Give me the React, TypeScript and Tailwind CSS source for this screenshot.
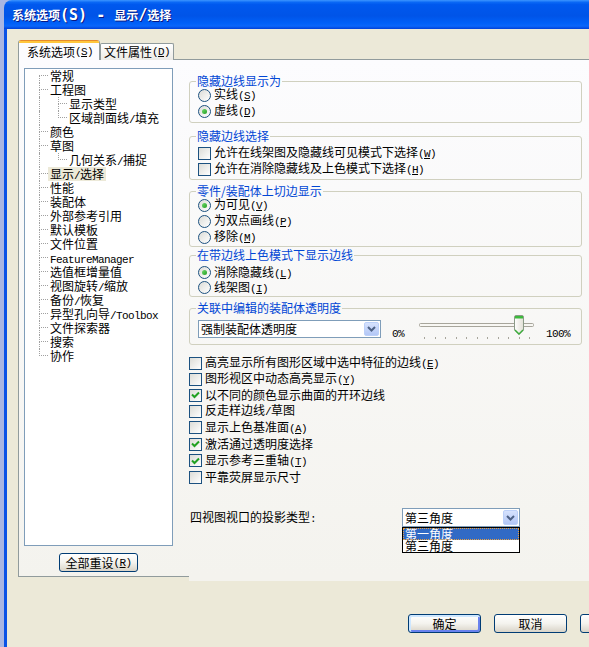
import React from "react";

// Latin runs are set in a narrow monospace face so they sit half-width beside the CJK glyphs
function Txt({ s }: { s: string }) {
  const parts = s.split(/([\x20-\x7e]+)/).filter((p) => p.length > 0);
  return (
    <>
      {parts.map((p, i) =>
        /^[\x20-\x7e]+$/.test(p) ? (
          <span key={i} className="font-['Liberation_Mono',monospace] text-[11px] tracking-[-0.6px]">
            {p}
          </span>
        ) : (
          <span key={i}>{p}</span>
        )
      )}
    </>
  );
}

// Access-key hint such as (S) with the letter underlined
function Mn({ k }: { k: string }) {
  return (
    <span className="font-['Liberation_Mono',monospace] text-[11px] tracking-[-0.6px]">
      (<span className="underline underline-offset-1">{k}</span>)
    </span>
  );
}

function Radio({ on }: { on?: boolean }) {
  return (
    <span className="flex h-[13px] w-[13px] shrink-0 items-center justify-center rounded-full border border-[#1C5180] bg-linear-to-br from-[#DCDCD7] to-white">
      {on && <span className="h-[5px] w-[5px] rounded-full bg-linear-to-br from-[#6EDB6A] to-[#1E9E1E]" />}
    </span>
  );
}

function Check({ on }: { on?: boolean }) {
  return (
    <span className="flex h-[13px] w-[13px] shrink-0 items-center justify-center border border-[#1C5180] bg-linear-to-br from-[#DCDCD7] to-white">
      {on && (
        <svg width="9" height="8" viewBox="0 0 9 8">
          <polyline points="1,3.5 3.5,6 8,1.5" fill="none" stroke="#21A121" strokeWidth="2" />
        </svg>
      )}
    </span>
  );
}

function Legend({ children }: { children: React.ReactNode }) {
  return <legend className="-ml-[2px] px-[1px] leading-[12px] text-[#0046D5]">{children}</legend>;
}

function RadioRow({ label, k, on, h15 }: { label: string; k?: string; on?: boolean; h15?: boolean }) {
  return (
    <div className={`flex items-center gap-[3px] leading-[14px] ${h15 ? "h-[15px]" : "h-[16px]"}`}>
      <Radio on={on} />
      <span>
        <Txt s={label} />
        {k && <Mn k={k} />}
      </span>
    </div>
  );
}

function CheckRow({ label, k, on, tall }: { label: string; k?: string; on?: boolean; tall?: boolean }) {
  return (
    <div className={`flex items-center gap-[3px] leading-[14px] ${tall ? "h-[17px]" : "h-[16px]"}`}>
      <Check on={on} />
      <span>
        <Txt s={label} />
        {k && <Mn k={k} />}
      </span>
    </div>
  );
}

function Combo({ text, className }: { text: string; className: string }) {
  return (
    <div className={`flex items-stretch border border-[#7F9DB9] bg-white ${className}`}>
      <span className="flex flex-1 items-center pl-[2px] leading-[14px]">{text}</span>
      <span className="m-[1px] flex w-[15px] items-center justify-center rounded-[2px] border border-[#BCD0F9] bg-linear-to-b from-[#D6E2FD] to-[#B3C7F6]">
        <svg width="9" height="6" viewBox="0 0 9 6">
          <polyline points="1,1 4.5,4.5 8,1" fill="none" stroke="#4D6185" strokeWidth="2" />
        </svg>
      </span>
    </div>
  );
}

function XpButton({ children, className, def }: { children?: React.ReactNode; className: string; def?: boolean }) {
  return (
    <div
      className={`flex h-[19px] items-center justify-center rounded-[3px] border border-[#003C74] bg-linear-to-b from-white via-[#F4F3EE] to-[#D9D4C8] leading-[14px] ${
        def ? "shadow-[inset_1px_1px_0_1px_#CEE7FF,inset_-1px_-1px_0_1px_#6982EE]" : ""
      } ${className}`}
    >
      {children}
    </div>
  );
}

type TreeItem = { t: string; lvl: 0 | 1; first?: boolean; last?: boolean; sel?: boolean };

const tree: TreeItem[] = [
  { t: "常规", lvl: 0, first: true },
  { t: "工程图", lvl: 0 },
  { t: "显示类型", lvl: 1 },
  { t: "区域剖面线/填充", lvl: 1, last: true },
  { t: "颜色", lvl: 0 },
  { t: "草图", lvl: 0 },
  { t: "几何关系/捕捉", lvl: 1, last: true },
  { t: "显示/选择", lvl: 0, sel: true },
  { t: "性能", lvl: 0 },
  { t: "装配体", lvl: 0 },
  { t: "外部参考引用", lvl: 0 },
  { t: "默认模板", lvl: 0 },
  { t: "文件位置", lvl: 0 },
  { t: "FeatureManager", lvl: 0 },
  { t: "选值框增量值", lvl: 0 },
  { t: "视图旋转/缩放", lvl: 0 },
  { t: "备份/恢复", lvl: 0 },
  { t: "异型孔向导/Toolbox", lvl: 0 },
  { t: "文件探索器", lvl: 0 },
  { t: "搜索", lvl: 0 },
  { t: "协作", lvl: 0, last: true },
];

// Dotted elbow connector of a tree row
function Conn({ first, last }: { first?: boolean; last?: boolean }) {
  return (
    <div className="flex w-[9px] shrink-0 flex-col">
      <div
        className={`h-[7px] border-b border-dotted border-[#A0A0A0] ${first ? "" : "border-l"}`}
      />
      <div className={`h-[7px] ${last ? "" : "border-l border-dotted border-[#A0A0A0]"}`} />
    </div>
  );
}

function TreeRow({ item }: { item: TreeItem }) {
  return (
    <div className="flex h-[14px]">
      <div className="w-[14px] shrink-0" />
      {item.lvl === 0 ? (
        <Conn first={item.first} last={item.last} />
      ) : (
        <>
          <div className="w-[19px] shrink-0 border-l border-dotted border-[#A0A0A0]" />
          <Conn last={item.last} />
        </>
      )}
      <span className={`whitespace-nowrap px-[2px] leading-[14px] ${item.sel ? "bg-[#ECE9D8]" : ""}`}>
        <Txt s={item.t} />
      </span>
    </div>
  );
}

function Slider() {
  const ticks = Array.from({ length: 11 }, (_, i) => Math.round(10 + i * 10.5));
  return (
    <svg width="126" height="26" viewBox="0 0 126 26" className="-mt-[6px] ml-[10px] shrink-0">
      <defs>
        <linearGradient id="thumbFill" x1="0" y1="0" x2="1" y2="0">
          <stop offset="0" stopColor="#FFFFFF" />
          <stop offset="1" stopColor="#E2E0D6" />
        </linearGradient>
      </defs>
      <rect x="5.5" y="9.5" width="114" height="3" rx="1" fill="#F8F7F3" stroke="#A7A59B" />
      {ticks.map((x) => (
        <rect key={x} x={x} y="23" width="1" height="2" fill="#A7A59B" />
      ))}
      <path
        d="M100.5 3 Q100.5 1.5 102 1.5 H108 Q109.5 1.5 109.5 3 V16 L105 20.5 L100.5 16 Z"
        fill="url(#thumbFill)"
        stroke="#8C9A88"
      />
      <rect x="101" y="2" width="8" height="2.5" fill="#3CBA3C" />
      <polyline points="101,16 105,20 109,16" fill="none" stroke="#3AAE3A" strokeWidth="1.4" />
    </svg>
  );
}

const checks: { label: string; k?: string; on?: boolean; tall?: boolean }[] = [
  { label: "高亮显示所有图形区域中选中特征的边线", k: "E" },
  { label: "图形视区中动态高亮显示", k: "Y" },
  { label: "以不同的颜色显示曲面的开环边线", on: true },
  { label: "反走样边线/草图" },
  { label: "显示上色基准面", k: "A", tall: true },
  { label: "激活通过透明度选择", on: true },
  { label: "显示参考三重轴", k: "T", on: true, tall: true },
  { label: "平靠荧屏显示尺寸" },
];

export default function App() {
  return (
    <div className="h-[647px] w-[589px] overflow-hidden bg-[#A9B6E2] font-['Noto_Sans_CJK_SC','Noto_Sans',sans-serif] text-[12px] text-black">
      <div className="ml-[4px] w-[667px]">
        {/* title bar */}
        <div className="flex h-[29px] items-center rounded-t-[8px] bg-[linear-gradient(to_bottom,#3D95FF_0%,#0A68F5_8%,#0058EE_16%,#0054E8_55%,#0060F8_80%,#0A66FA_90%,#0040D8_100%)] pl-[8px]">
          <span className="whitespace-nowrap font-bold leading-[14px] text-white [text-shadow:1px_1px_0_#0A1883]">
            系统选项
            <span className="font-['DejaVu_Sans_Mono',monospace] text-[15px]">(S) - </span>
            显示
            <span className="font-['DejaVu_Sans_Mono',monospace] text-[15px]">/</span>
            选择
          </span>
        </div>

        {/* dialog body */}
        <div className="h-[618px] border-x-[3px] border-[#0A52E6] bg-[#ECE9D8]">
          {/* tabs */}
          <div className="relative z-10 -mb-[1px] flex items-end pl-[11px] pt-[11px]">
            <div className="flex h-[20px] w-[82px] flex-col overflow-hidden rounded-t-[3px] border-x border-[#919B9C] bg-[#FCFCFE]">
              <div className="h-[1px] bg-[#E68B2C]" />
              <div className="h-[2px] bg-[#FFC73C]" />
              <div className="flex flex-1 items-center pl-[8px] leading-[14px]">
                系统选项
                <Mn k="S" />
              </div>
            </div>
            <div className="flex h-[17px] w-[74px] items-center rounded-t-[2px] border-x border-t border-[#919B9C] bg-linear-to-b from-white to-[#ECEBE6] pl-[3px] leading-[14px]">
              文件属性
              <Mn k="D" />
            </div>
          </div>

          {/* tab page */}
          <div className="mx-[11px]">
            <div className="flex h-[517px] border-x border-t border-[#919B9C] bg-linear-to-b from-[#FCFCFE] to-[#F4F3EE] pl-[5px] pt-[8px]">
              {/* category tree */}
              <div className="flex w-[149px] shrink-0 flex-col items-center">
                <div className="h-[478px] w-[149px] border border-[#7F9DB9] bg-white">
                  {tree.map((it) => (
                    <TreeRow key={it.t} item={it} />
                  ))}
                </div>
                <XpButton className="mt-[7px] w-[79px]">
                  全部重设
                  <Mn k="R" />
                </XpButton>
              </div>

              {/* options */}
              <div className="ml-[16px] flex w-[393px] shrink-0 flex-col">
                <fieldset className="mt-[7px] rounded-[3px] border border-[#D0D0BF] px-[8px] pb-[3px]">
                  <Legend>隐藏边线显示为</Legend>
                  <RadioRow label="实线" k="S" />
                  <RadioRow label="虚线" k="D" on />
                </fieldset>

                <fieldset className="mt-[7px] rounded-[3px] border border-[#D0D0BF] px-[8px] pb-[2px] pt-[3px]">
                  <Legend>隐藏边线选择</Legend>
                  <CheckRow label="允许在线架图及隐藏线可见模式下选择" k="W" />
                  <CheckRow label="允许在消除隐藏线及上色模式下选择" k="H" />
                </fieldset>

                <fieldset className="mt-[5px] rounded-[3px] border border-[#D0D0BF] px-[8px] pb-[1px]">
                  <Legend>零件/装配体上切边显示</Legend>
                  <RadioRow label="为可见" k="V" on />
                  <RadioRow label="为双点画线" k="P" />
                  <RadioRow label="移除" k="M" />
                </fieldset>

                <fieldset className="mt-[2px] rounded-[3px] border border-[#D0D0BF] px-[8px] pb-[1px] pt-[4px]">
                  <Legend>在带边线上色模式下显示边线</Legend>
                  <RadioRow label="消除隐藏线" k="L" on h15 />
                  <RadioRow label="线架图" k="I" h15 />
                </fieldset>

                <fieldset className="mt-[5px] rounded-[3px] border border-[#D0D0BF] px-[8px] pb-[6px] pt-[6px]">
                  <Legend>关联中编辑的装配体透明度</Legend>
                  <div className="flex h-[18px] items-start">
                    <Combo text="强制装配体透明度" className="h-[18px] w-[183px] shrink-0" />
                    <span className="ml-[11px] mt-[5px] leading-[14px]">
                      <Txt s="0%" />
                    </span>
                    <Slider />
                    <span className="ml-[6px] mt-[5px] leading-[14px]">
                      <Txt s="100%" />
                    </span>
                  </div>
                </fieldset>

                <div className="mt-[10px] flex flex-col">
                  {checks.map((c) => (
                    <CheckRow key={c.label} label={c.label} k={c.k} on={c.on} tall={c.tall} />
                  ))}
                </div>

                <div className="mt-[23px] flex h-[19px] items-center">
                  <span className="ml-[1px] w-[212px] shrink-0 leading-[14px]">
                    <Txt s="四视图视口的投影类型:" />
                  </span>
                  <div className="relative">
                    <Combo text="第三角度" className="h-[19px] w-[118px]" />
                    <div className="absolute left-0 top-full z-20 w-full border border-black bg-white">
                      <div className="h-[12px] bg-[#316AC5] pl-[2px] leading-[12px] text-white outline-1 -outline-offset-1 outline-dotted outline-[#E8A040]">
                        第一角度
                      </div>
                      <div className="h-[12px] pl-[2px] leading-[12px]">第三角度</div>
                    </div>
                  </div>
                </div>
              </div>
            </div>
            {/* lower edge of the tab page */}
            <div className="flex h-[5px]">
              <div className="w-[171px] border-t border-[#919B9C]" />
              <div className="flex-1 bg-[#F4F3EE]" />
            </div>
          </div>

          {/* dialog buttons */}
          <div className="mt-[33px] flex justify-end gap-[13px] pr-[15px]">
            <XpButton className="w-[73px]" def>
              确定
            </XpButton>
            <XpButton className="w-[73px]">取消</XpButton>
            <XpButton className="w-[73px]" />
          </div>
        </div>
      </div>
    </div>
  );
}
